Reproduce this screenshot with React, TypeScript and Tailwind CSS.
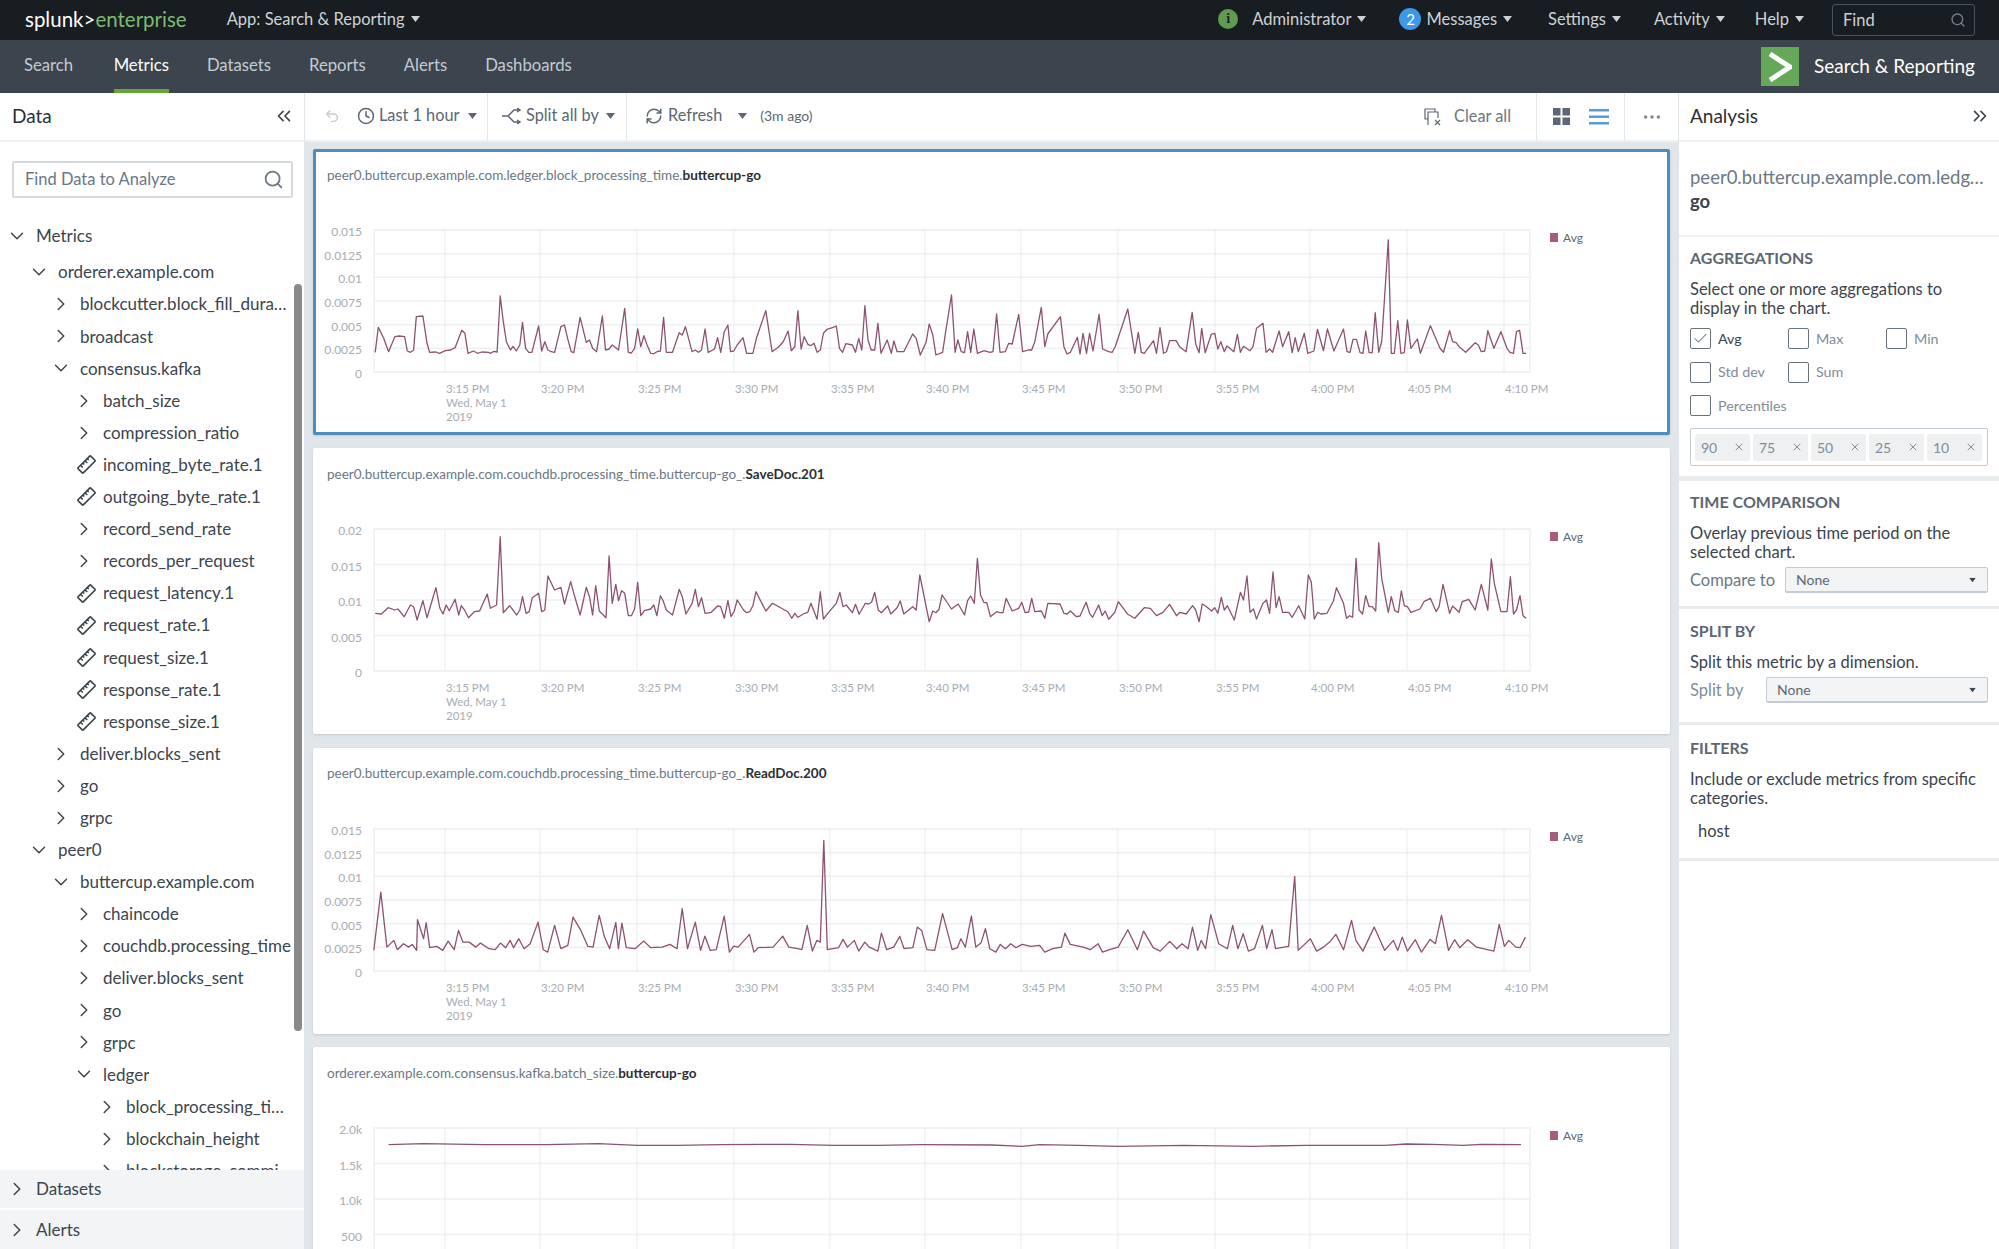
import {
  Check,
  ChevronDown,
  ChevronRight,
  ChevronsLeft,
  ChevronsRight,
  Clock,
  Ellipsis,
  RefreshCw,
  Search,
  Undo2,
  X,
} from "lucide-react";

// traced from the chart, as [x, y] in crop coordinates
type Pt = [number, number];

const toPoints = (pts: Pt[], ox: number, sx: number, oy: number) =>
  pts.map(([x, y]) => `${(ox + x / sx - 316).toFixed(1)},${(oy + y / 3).toFixed(1)}`);

const chart1 = [
  ...toPoints(
    [
      [146, 622], [153, 547], [165, 580], [176, 620], [190, 575], [200, 573], [212, 575], [218, 618], [225, 622], [232, 615], [238, 515], [253, 513], [262, 595], [268, 622], [282, 621], [290, 625], [303, 617], [315, 615], [325, 608], [340, 556], [347, 565], [354, 625], [366, 618], [375, 625], [385, 621], [400, 622], [405, 625], [412, 619], [419, 621], [426, 453], [433, 530], [440, 590], [449, 615], [455, 604], [462, 618], [470, 600], [476, 532], [483, 610], [490, 622], [497, 622], [512, 543], [519, 618], [526, 590], [533, 615], [540, 620], [548, 622], [562, 545], [570, 540], [577, 580], [585, 620], [591, 623], [605, 517], [619, 592], [626, 585], [633, 610], [642, 620], [655, 513], [662, 615], [670, 612], [677, 600], [685, 608], [691, 615], [705, 490], [713, 622], [720, 624], [727, 610], [734, 552], [741, 605], [748, 572], [755, 600], [763, 625], [770, 626], [777, 620], [785, 618], [792, 517], [798, 622], [812, 622], [827, 563], [834, 570], [841, 545], [856, 620], [863, 615], [870, 622], [877, 615], [885, 552], [892, 622], [906, 612], [913, 578], [920, 622], [928, 560], [936, 540], [942, 620], [949, 618], [957, 600], [970, 578], [978, 625], [992, 625], [1000, 580], [1021, 497], [1035, 620], [1050, 605], [1060, 590], [1071, 558], [1078, 617], [1086, 605], [1093, 497], [1100, 612], [1107, 575], [1115, 598], [1122, 602], [1129, 595], [1136, 622], [1143, 615], [1150, 565], [1158, 553], [1172, 547], [1179, 543], [1186, 610], [1193, 622], [1200, 596], [1215, 600], [1222, 622], [1229, 580], [1236, 615], [1243, 482], [1250, 585], [1257, 615], [1265, 615], [1272, 535], [1279, 625], [1293, 585], [1302, 625], [1308, 588], [1315, 620], [1330, 620], [1350, 567], [1358, 580], [1367, 630], [1380, 592], [1387, 537], [1395, 570], [1402, 630], [1417, 622], [1424, 560], [1437, 450], [1445, 622], [1451, 585], [1459, 620], [1466, 623], [1473, 560], [1480, 622], [1487, 552], [1495, 625], [1510, 617], [1523, 622], [1530, 620], [1538, 507],
    ],
    310, 2.24, -55,
  ),
  ...toPoints(
    [
      [0, 622], [12, 620], [20, 595], [28, 597], [43, 508], [52, 620], [65, 615], [73, 615], [80, 590], [95, 487], [103, 605], [110, 567], [139, 515], [147, 605], [154, 627], [162, 622], [178, 577], [184, 627], [191, 565], [199, 625], [206, 565], [214, 618], [228, 508], [236, 612], [250, 620], [258, 622], [265, 605], [294, 492], [310, 625], [318, 562], [325, 622], [332, 625], [353, 587], [360, 625], [368, 548], [376, 625], [383, 620], [390, 587], [405, 587], [413, 605], [428, 620], [442, 502], [450, 597], [458, 623], [464, 550], [472, 623], [486, 568], [494, 565], [501, 612], [508, 590], [516, 620], [522, 603], [538, 620], [546, 568], [553, 622], [560, 604], [575, 617], [582, 605], [590, 550], [605, 535], [612, 622], [620, 612], [627, 622], [642, 558], [650, 605], [664, 560], [672, 623], [679, 578], [686, 620], [700, 565], [708, 625], [722, 618], [730, 553], [744, 617], [753, 552], [768, 618], [790, 552], [798, 620], [805, 622], [812, 583], [820, 583], [828, 623], [835, 625], [841, 558], [849, 623], [856, 623], [863, 503], [871, 622], [878, 590], [893, 285], [900, 625], [907, 625], [915, 527], [922, 625], [930, 623], [937, 525], [945, 610], [960, 582], [967, 625], [990, 542], [1012, 610], [1020, 622], [1034, 557], [1041, 590], [1049, 593], [1056, 605], [1071, 622], [1093, 593], [1100, 600], [1107, 620], [1115, 618], [1122, 557], [1136, 610], [1152, 560], [1166, 610], [1173, 622], [1181, 625], [1188, 560], [1195, 556], [1203, 625], [1210, 625],
    ],
    1000, 2.3, -55,
  ),
].join(" ");

const chart2 = [
  ...toPoints(
    [
      [146, 520], [160, 522], [175, 503], [190, 510], [197, 507], [211, 530], [225, 495], [232, 500], [240, 540], [253, 482], [262, 533], [282, 443], [291, 505], [298, 522], [305, 495], [312, 512], [325, 478], [333, 525], [339, 497], [347, 512], [355, 533], [368, 515], [380, 513], [397, 462], [404, 505], [418, 495], [426, 290], [433, 518], [447, 497], [463, 525], [470, 510], [476, 470], [484, 520], [491, 515], [498, 473], [512, 460], [519, 515], [526, 510], [533, 408], [548, 450], [562, 442], [570, 492], [584, 425], [591, 460], [605, 525], [619, 442], [626, 470], [633, 525], [640, 437], [648, 513], [663, 533], [670, 348], [677, 490], [685, 433], [691, 482], [698, 452], [705, 460], [713, 527], [720, 527], [727, 507], [734, 427], [741, 527], [749, 512], [763, 507], [770, 495], [777, 527], [785, 467], [791, 482], [798, 510], [812, 525], [827, 448], [834, 470], [842, 522], [856, 490], [863, 448], [870, 500], [877, 473], [885, 520], [899, 517], [913, 498], [920, 500], [928, 535], [936, 482], [943, 530], [950, 515], [957, 480], [971, 510], [978, 518], [985, 515], [992, 497], [999, 455], [1021, 513], [1036, 490], [1050, 500], [1071, 516], [1079, 535], [1086, 520], [1093, 532], [1108, 520], [1115, 517], [1122, 490], [1136, 538], [1143, 455], [1150, 537], [1165, 512], [1179, 490], [1187, 457], [1194, 500], [1201, 495], [1215, 518], [1222, 493], [1230, 523], [1244, 490], [1251, 492], [1258, 487], [1265, 457], [1273, 510], [1280, 518], [1294, 498], [1301, 522], [1315, 503], [1322, 483], [1330, 522], [1350, 500], [1358, 510], [1366, 405], [1387, 545], [1395, 513], [1402, 518], [1409, 508], [1416, 465], [1437, 507], [1452, 492], [1466, 525], [1473, 482], [1480, 468], [1488, 490], [1495, 355], [1502, 465], [1510, 488], [1516, 488], [1524, 530], [1538, 515],
    ],
    310, 2.24, -59,
  ),
  ...toPoints(
    [
      [0, 518], [7, 518], [14, 475], [28, 513], [43, 505], [50, 487], [58, 518], [66, 516], [73, 475], [80, 515], [95, 513], [103, 535], [110, 490], [138, 492], [147, 520], [154, 522], [162, 513], [176, 530], [184, 528], [198, 487], [206, 520], [213, 532], [227, 495], [235, 527], [242, 513], [250, 538], [264, 517], [272, 485], [294, 523], [310, 535], [332, 503], [346, 505], [360, 527], [375, 517], [390, 493], [406, 527], [414, 517], [428, 522], [443, 497], [450, 510], [458, 545], [465, 492], [472, 497], [487, 513], [494, 503], [501, 520], [509, 472], [516, 510], [523, 497], [539, 540], [553, 457], [560, 480], [568, 408], [575, 517], [583, 507], [590, 537], [605, 490], [613, 480], [620, 520], [628, 396], [635, 503], [642, 470], [650, 517], [664, 517], [672, 532], [687, 497], [701, 537], [709, 405], [716, 427], [723, 537], [731, 517], [738, 522], [752, 520], [767, 482], [774, 443], [790, 490], [797, 535], [804, 527], [811, 532], [819, 355], [826, 510], [834, 522], [841, 467], [849, 500], [856, 500], [864, 513], [871, 308], [878, 415], [893, 517], [900, 470], [908, 512], [916, 517], [923, 453], [930, 497], [937, 500], [945, 517], [966, 507], [975, 485], [990, 475], [1003, 515], [1010, 500], [1019, 433], [1034, 520], [1041, 498], [1056, 517], [1063, 485], [1078, 478], [1093, 510], [1107, 433], [1122, 510], [1130, 357], [1137, 430], [1152, 515], [1166, 515], [1174, 410], [1181, 522], [1188, 510], [1196, 467], [1203, 527], [1210, 535],
    ],
    1000, 2.3, -59,
  ),
].join(" ");

const chart3 = toPoints(
  [
    [73, 630], [81, 455], [88, 620], [96, 600], [100, 628], [107, 610], [113, 620], [117, 612], [122, 630], [123, 538], [130, 595], [133, 547], [137, 622], [145, 618], [152, 630], [158, 602], [165, 628], [170, 570], [175, 605], [182, 605], [190, 620], [195, 608], [205, 625], [212, 628], [218, 608], [224, 622], [229, 600], [233, 622], [239, 595], [245, 625], [252, 610], [261, 545], [267, 628], [272, 635], [280, 555], [287, 625], [295, 615], [301, 530], [310, 570], [318, 618], [324, 620], [331, 525], [337, 590], [343, 625], [350, 546], [353, 625], [357, 548], [362, 622], [372, 625], [382, 602], [390, 622], [403, 620], [412, 612], [420, 625], [426, 505], [432, 625], [441, 545], [447, 630], [452, 587], [458, 630], [465, 628], [474, 527], [480, 635], [485, 617], [490, 620], [503, 582], [508, 635], [513, 622], [530, 620], [541, 587], [548, 620], [558, 625], [563, 628], [569, 555], [575, 632], [580, 600], [584, 605], [588, 300], [592, 628], [605, 622], [610, 597], [615, 620], [623, 600], [628, 632], [635, 605], [640, 620], [650, 632], [654, 578], [660, 628], [668, 620], [675, 588], [680, 625], [690, 622], [695, 560], [700, 570], [706, 628], [715, 630], [724, 520], [735, 628], [741, 622], [745, 595], [750, 620], [757, 527], [762, 620], [768, 608], [773, 565], [778, 625], [785, 635], [790, 612], [796, 625], [802, 610], [808, 622], [815, 612], [825, 618], [835, 615], [841, 635], [850, 625], [860, 620], [864, 578], [870, 612], [885, 620], [893, 628], [902, 610], [907, 635], [915, 628], [925, 620], [936, 568], [947, 628], [954, 572], [965, 622], [973, 632], [984, 603], [992, 625], [998, 610], [1005, 625], [1010, 560], [1016, 630], [1020, 600], [1025, 625], [1031, 523], [1040, 610], [1050, 625], [1056, 555], [1062, 625], [1068, 580], [1074, 632], [1081, 625], [1090, 555], [1095, 625], [1101, 568], [1105, 625], [1120, 618], [1127, 408], [1131, 630], [1145, 595], [1152, 632], [1160, 620], [1167, 605], [1174, 582], [1183, 628], [1192, 540], [1197, 600], [1205, 632], [1218, 560], [1230, 630], [1240, 600], [1245, 630], [1250, 590], [1256, 632], [1265, 598], [1272, 635], [1282, 597], [1288, 610], [1295, 525], [1303, 630], [1310, 598], [1316, 622], [1325, 598], [1335, 620], [1355, 632], [1361, 552], [1367, 618], [1372, 600], [1380, 620], [1385, 622], [1391, 590],
  ],
  310, 1.1445, -58.6,
).join(" ");

const chart4 = toPoints(
  [
    [90, 344], [130, 341], [200, 344], [270, 344], [330, 341], [375, 346], [420, 346], [470, 344], [550, 343], [600, 346], [650, 346], [700, 344], [780, 345], [815, 349], [835, 344], [880, 346], [925, 349], [1000, 346], [1080, 349], [1140, 346], [1230, 346], [1255, 342], [1285, 343], [1320, 346], [1340, 343], [1386, 344],
  ],
  310, 1.1445, -68,
).join(" ");

const GRID_X = [445, 540, 637, 734, 830, 925, 1021, 1118, 1215, 1310, 1407, 1504].map((x) => x - 316);
const TIMES = ["3:15 PM", "3:20 PM", "3:25 PM", "3:30 PM", "3:35 PM", "3:40 PM", "3:45 PM", "3:50 PM", "3:55 PM", "4:00 PM", "4:05 PM", "4:10 PM"];

const cards = [
  {
    prefix: "peer0.buttercup.example.com.ledger.block_processing_time.",
    name: "buttercup-go",
    ticks: ["0.015", "0.0125", "0.01", "0.0075", "0.005", "0.0025", "0"],
    points: chart1,
    selected: true,
  },
  {
    prefix: "peer0.buttercup.example.com.couchdb.processing_time.buttercup-go_.",
    name: "SaveDoc.201",
    ticks: ["0.02", "0.015", "0.01", "0.005", "0"],
    points: chart2,
  },
  {
    prefix: "peer0.buttercup.example.com.couchdb.processing_time.buttercup-go_.",
    name: "ReadDoc.200",
    ticks: ["0.015", "0.0125", "0.01", "0.0075", "0.005", "0.0025", "0"],
    points: chart3,
  },
  {
    prefix: "orderer.example.com.consensus.kafka.batch_size.",
    name: "buttercup-go",
    ticks: ["2.0k", "1.5k", "1.0k", "500", "0"],
    points: chart4,
  },
];

const tree: { label: string; level: 0 | 1 | 2 | 3 | 4; icon: "open" | "closed" | "metric" }[] = [
  { label: "Metrics", level: 0, icon: "open" },
  { label: "orderer.example.com", level: 1, icon: "open" },
  { label: "blockcutter.block_fill_duration", level: 2, icon: "closed" },
  { label: "broadcast", level: 2, icon: "closed" },
  { label: "consensus.kafka", level: 2, icon: "open" },
  { label: "batch_size", level: 3, icon: "closed" },
  { label: "compression_ratio", level: 3, icon: "closed" },
  { label: "incoming_byte_rate.1", level: 3, icon: "metric" },
  { label: "outgoing_byte_rate.1", level: 3, icon: "metric" },
  { label: "record_send_rate", level: 3, icon: "closed" },
  { label: "records_per_request", level: 3, icon: "closed" },
  { label: "request_latency.1", level: 3, icon: "metric" },
  { label: "request_rate.1", level: 3, icon: "metric" },
  { label: "request_size.1", level: 3, icon: "metric" },
  { label: "response_rate.1", level: 3, icon: "metric" },
  { label: "response_size.1", level: 3, icon: "metric" },
  { label: "deliver.blocks_sent", level: 2, icon: "closed" },
  { label: "go", level: 2, icon: "closed" },
  { label: "grpc", level: 2, icon: "closed" },
  { label: "peer0", level: 1, icon: "open" },
  { label: "buttercup.example.com", level: 2, icon: "open" },
  { label: "chaincode", level: 3, icon: "closed" },
  { label: "couchdb.processing_time", level: 3, icon: "closed" },
  { label: "deliver.blocks_sent", level: 3, icon: "closed" },
  { label: "go", level: 3, icon: "closed" },
  { label: "grpc", level: 3, icon: "closed" },
  { label: "ledger", level: 3, icon: "open" },
  { label: "block_processing_time", level: 4, icon: "closed" },
  { label: "blockchain_height", level: 4, icon: "closed" },
  { label: "blockstorage_commit_time", level: 4, icon: "closed" },
];

const levelPadding = {
  0: "pl-[9px]",
  1: "pl-[31px]",
  2: "pl-[53px]",
  3: "pl-[76px]",
  4: "pl-[99px]",
};

function Caret({ className }: { className?: string }) {
  return (
    <svg width="9" height="6" viewBox="0 0 9 6" className={className}>
      <path d="M0 0h9L4.5 6z" fill="currentColor" />
    </svg>
  );
}

function MetricIcon() {
  return (
    <svg width="19" height="19" viewBox="0 0 18 18" fill="none" stroke="currentColor" strokeWidth="1.6" className="shrink-0 translate-x-[2px]">
      <g transform="rotate(-45 9 9)">
        <rect x="0.5" y="5.5" width="17" height="7" rx="1" />
        <path d="M4.5 5.5v3M7.5 5.5v2M10.5 5.5v3M13.5 5.5v2" />
      </g>
    </svg>
  );
}

function Chart({ card }: { card: (typeof cards)[number] }) {
  const step = 142 / (card.ticks.length - 1);
  return (
    <svg width="1349" height="232" viewBox="0 0 1349 232" className="block">
      <rect x="58" y="30" width="1156" height="142" fill="none" stroke="#eef0f2" strokeWidth="1.5" />
      {card.ticks.map((t, i) => (
        <g key={t}>
          <line x1="58" x2="1214" y1={30 + i * step} y2={30 + i * step} stroke="#eef0f2" strokeWidth="1.5" />
          <text x="46" y={36 + i * step} textAnchor="end" fontSize="12" fill="#a8adb2">
            {t}
          </text>
        </g>
      ))}
      {GRID_X.map((x, i) => (
        <g key={x}>
          <line x1={x} x2={x} y1="30" y2="172" stroke="#e8ebee" />
          <text x={x + 1} y="193" fontSize="11.5" fill="#a8adb2">
            {TIMES[i]}
          </text>
        </g>
      ))}
      <text x="130" y="207" fontSize="11.5" fill="#a8adb2">
        Wed, May 1
      </text>
      <text x="130" y="221" fontSize="11.5" fill="#a8adb2">
        2019
      </text>
      <polyline points={card.points} fill="none" stroke="#8c5272" strokeWidth="1.3" strokeLinejoin="round" />
      <rect x="1234" y="33" width="8" height="9" fill="#a65c7d" />
      <text x="1247" y="42" fontSize="12" fill="#5c6773">
        Avg
      </text>
    </svg>
  );
}

function ChartCard({ card }: { card: (typeof cards)[number] }) {
  return (
    <div
      className={`h-[286px] shrink-0 rounded-[2px] border-[3px] bg-white shadow-sm ${
        card.selected ? "border-[#4f8dba]" : "border-white"
      }`}
    >
      <div className="flex h-[48px] items-center pb-[2px] pl-[11px] text-[13.5px] text-[#6b7785]">
        <span>{card.prefix}</span>
        <span className="font-bold text-[#2b3033]">{card.name}</span>
      </div>
      <Chart card={card} />
    </div>
  );
}

function CheckItem({ label, checked }: { label: string; checked?: boolean }) {
  return (
    <div className="flex w-[98px] items-center gap-[7px]">
      <div className="flex h-[21px] w-[21px] items-center justify-center rounded-[2px] border border-[#69737d]">
        {checked && <Check size={17} strokeWidth={1.3} className="text-[#3c444d]" />}
      </div>
      <span className={`text-[14.3px] ${checked ? "text-[#3c444d]" : "text-[#818d99]"}`}>{label}</span>
    </div>
  );
}

function SectionTitle({ children }: { children: string }) {
  return <div className="text-[16px] font-bold leading-[20px] text-[#5c6773]">{children}</div>;
}

function SelectBox({ className }: { className: string }) {
  return (
    <div
      className={`flex h-[26px] items-center justify-between rounded-[2px] border border-b-2 border-[#c3cbd4] bg-[#f2f4f5] pl-[10px] pr-[10px] text-[14px] text-[#5c6773] ${className}`}
    >
      None
      <Caret className="scale-75 text-[#3c444d]" />
    </div>
  );
}

function NavMenu({ label }: { label: string }) {
  return (
    <div className="flex items-center gap-[6px] text-[16.5px] text-[#ced2d5]">
      {label}
      <Caret />
    </div>
  );
}

export default function App() {
  return (
    <div className="flex h-[1249px] w-[1999px] flex-col overflow-hidden bg-white [font-family:Lato,sans-serif]">
      {/* top bar */}
      <div className="flex h-[40px] shrink-0 items-center bg-[#171d21] pb-[2px] pl-[25px] pr-[24px]">
        <div className="text-[20.5px] leading-none text-[#fff]">
          splunk&gt;<span className="text-[#7dbb72]">enterprise</span>
        </div>
        <div className="ml-[40px] flex items-center gap-[6px] text-[16.5px] text-[#ced2d5]">
          App: Search &amp; Reporting
          <Caret />
        </div>
        <div className="ml-auto flex items-center">
          <div className="mr-[14px] flex h-[20px] w-[20px] items-center justify-center rounded-full bg-[#5f9c50] font-serif text-[13px] font-bold text-[#171d21]">
            i
          </div>
          <NavMenu label="Administrator" />
          <div className="ml-[33px] mr-[5px] flex h-[22px] w-[22px] items-center justify-center rounded-full bg-[#3c98e8] text-[15px] text-white">
            2
          </div>
          <NavMenu label="Messages" />
          <div className="ml-[36px]">
            <NavMenu label="Settings" />
          </div>
          <div className="ml-[33px]">
            <NavMenu label="Activity" />
          </div>
          <div className="ml-[30px]">
            <NavMenu label="Help" />
          </div>
          <div className="ml-[28px] mt-[2px] flex h-[32px] w-[143px] items-center justify-between rounded-[3px] border border-[#4a5259] pl-[10px] pr-[8px] text-[16.5px] text-[#ced2d5]">
            Find
            <Search size={16} className="text-[#7b8287]" />
          </div>
        </div>
      </div>

      {/* app bar */}
      <div className="flex h-[53px] shrink-0 items-center bg-[#3c444d] pl-[24px] pr-[24px]">
        <div className="flex h-full gap-[38px] text-[16.7px] text-[#c3cbd4]">
          <div className="flex items-center pb-[2px]">Search</div>
          <div className="ml-[2.5px] flex items-center border-b-4 border-[#65a637] pt-[2px] text-white">Metrics</div>
          <div className="flex items-center pb-[2px]">Datasets</div>
          <div className="flex items-center pb-[2px]">Reports</div>
          <div className="flex items-center pb-[2px]">Alerts</div>
          <div className="flex items-center pb-[2px]">Dashboards</div>
        </div>
        <div className="ml-auto flex items-center gap-[15px]">
          <div className="flex h-[39px] w-[38px] items-center justify-center bg-[#65a85a]">
            <svg width="24" height="30" viewBox="0 0 24 30">
              <path d="M2 2l20 13L2 28" fill="none" stroke="#fff" strokeWidth="5" />
            </svg>
          </div>
          <div className="text-[19px] text-white">Search &amp; Reporting</div>
        </div>
      </div>

      <div className="flex min-h-0 flex-1">
        {/* data sidebar */}
        <div className="flex w-[305px] shrink-0 flex-col border-r border-[#e1e6eb] bg-white">
          <div className="flex h-[49px] shrink-0 items-center justify-between border-b-2 border-[#eef0f2] pb-[1px] pl-[12px] pr-[9px]">
            <span className="text-[19px] text-[#2b3033]">Data</span>
            <ChevronsLeft size={22} strokeWidth={1.8} className="text-[#3c444d]" />
          </div>
          <div className="pl-[12px] pr-[11px] pt-[19px]">
            <div className="flex h-[37px] items-center justify-between rounded-[2px] border-2 border-[#d5dae0] pb-[1px] pl-[11px] pr-[7px] text-[16.5px] text-[#6b7785]">
              Find Data to Analyze
              <Search size={21} className="text-[#6b7785]" />
            </div>
          </div>
          <div className="relative mt-[22px] min-h-0 flex-1 overflow-hidden">
            {tree.map((row, i) => (
              <div
                key={i}
                className={`flex h-[32.1px] items-center pr-[12px] text-[17px] text-[#3c444d] ${levelPadding[row.level]} ${
                  i === 0 ? "mb-[4px]" : ""
                }`}
              >
                <span className="mr-[11px] flex w-[16px] shrink-0 justify-center">
                  {row.icon === "open" && <ChevronDown size={22} strokeWidth={1.6} className="shrink-0" />}
                  {row.icon === "closed" && <ChevronRight size={22} strokeWidth={1.6} className="shrink-0" />}
                  {row.icon === "metric" && <MetricIcon />}
                </span>
                <span className="truncate">{row.label}</span>
              </div>
            ))}
            <div className="absolute right-[2px] top-[64px] h-[747px] w-[8px] rounded-full bg-[#8a8a8a]" />
          </div>
          <div className="flex h-[38px] shrink-0 items-center bg-[#f2f4f5] pl-[9px] text-[17px] text-[#3c444d]">
            <span className="mr-[11px] flex w-[16px] justify-center">
              <ChevronRight size={22} strokeWidth={1.6} className="shrink-0" />
            </span>
            Datasets
          </div>
          <div className="mt-[2px] flex h-[39px] shrink-0 items-center bg-[#f2f4f5] pl-[9px] text-[17px] text-[#3c444d]">
            <span className="mr-[11px] flex w-[16px] justify-center">
              <ChevronRight size={22} strokeWidth={1.6} className="shrink-0" />
            </span>
            Alerts
          </div>
        </div>

        {/* main column */}
        <div className="flex min-w-0 flex-1 flex-col bg-[#e1e6eb]">
          <div className="flex h-[49px] shrink-0 items-center border-b-2 border-[#eef0f2] bg-white text-[16.3px] text-[#5c6773]">
            <div className="flex h-full w-[183px] items-center border-r border-[#e6e9ec] pb-[2px] pl-[19px]">
              <Undo2 size={16} className="text-[#c3cbd4]" />
              <Clock size={18} className="ml-[17px]" />
              <span className="ml-[4px]">Last 1 hour</span>
              <Caret className="ml-[9px]" />
            </div>
            <div className="flex h-full w-[139px] items-center border-r border-[#e6e9ec] pb-[2px] pl-[14px]">
              <svg width="20" height="16" viewBox="0 0 20 16" fill="none" stroke="currentColor" strokeWidth="1.5">
                <path d="M0 8h6l6-6h6M6 8l6 6h6M15 0l3 2-3 2M15 12l3 2-3 2" />
              </svg>
              <span className="ml-[4px]">Split all by</span>
              <Caret className="ml-[7px]" />
            </div>
            <div className="flex h-full items-center pb-[2px] pl-[18px]">
              <RefreshCw size={18} />
              <span className="ml-[5px]">Refresh</span>
              <Caret className="ml-[16px]" />
              <span className="ml-[13px] text-[14px]">(3m ago)</span>
            </div>
            <div className="ml-auto flex h-full items-center">
              <svg width="18" height="18" viewBox="0 0 18 18" fill="none" stroke="currentColor" strokeWidth="1.2">
                <path d="M4 11H1V1h10v3M4 17V4h10v6" />
                <path d="M11 12l5 5M16 12l-5 5" />
              </svg>
              <span className="ml-[12px] mr-[25px] text-[#6b7785]">Clear all</span>
              <div className="flex h-full w-[89px] items-center justify-center gap-[19px] border-x border-[#e6e9ec]">
                <svg width="17" height="17" viewBox="0 0 17 17" fill="#5c6773">
                  <path d="M0 0h7.5v7.5H0zM9.5 0H17v7.5H9.5zM0 9.5h7.5V17H0zM9.5 9.5H17V17H9.5z" />
                </svg>
                <svg width="20" height="16" viewBox="0 0 20 16" fill="#5b9bd0">
                  <path d="M0 0h20v2.5H0zM0 6.5h20v2.5H0zM0 13h20v2.5H0z" />
                </svg>
              </div>
              <div className="flex h-full w-[53px] items-center justify-center">
                <Ellipsis size={22} className="text-[#818d99]" />
              </div>
            </div>
          </div>
          <div className="flex min-h-0 flex-1 flex-col gap-[13.3px] overflow-hidden pl-[8px] pr-[8.5px] pt-[7px]">
            {cards.map((card) => (
              <ChartCard key={card.prefix + card.name} card={card} />
            ))}
          </div>
        </div>

        {/* analysis panel */}
        <div className="flex w-[321px] shrink-0 flex-col border-l border-[#e1e6eb] bg-white">
          <div className="flex h-[49px] shrink-0 items-center justify-between border-b-2 border-[#eef0f2] pb-[1px] pl-[11px] pr-[8px]">
            <span className="text-[19px] text-[#2b3033]">Analysis</span>
            <ChevronsRight size={22} strokeWidth={1.8} className="text-[#3c444d]" />
          </div>
          <div className="h-[95px] shrink-0 border-b-2 border-[#eef0f2] pl-[11px] pr-[14px] pt-[23px] text-[18.5px] leading-[24px]">
            <div className="truncate text-[#6b7785]">peer0.buttercup.example.com.ledger.block_processing_time.buttercup-</div>
            <div className="font-bold text-[#3c444d]">go</div>
          </div>
          <div className="h-[244px] shrink-0 border-b-[5px] border-[#e9ecef] pl-[11px] pr-[11px] pt-[11px]">
            <SectionTitle>AGGREGATIONS</SectionTitle>
            <p className="mt-[12px] text-[16.5px] leading-[19px] text-[#3c444d]">
              Select one or more aggregations to display in the chart.
            </p>
            <div className="mt-[10px] flex">
              <CheckItem label="Avg" checked />
              <CheckItem label="Max" />
              <CheckItem label="Min" />
            </div>
            <div className="mt-[12px] flex">
              <CheckItem label="Std dev" />
              <CheckItem label="Sum" />
            </div>
            <div className="mt-[12px] flex">
              <CheckItem label="Percentiles" />
            </div>
            <div className="mt-[12px] flex h-[38px] items-center gap-[3px] rounded-[2px] border border-[#c3cbd4] px-[4px]">
              {["90", "75", "50", "25", "10"].map((p) => (
                <div
                  key={p}
                  className="flex h-[27px] w-[55px] items-center justify-between rounded-[2px] bg-[#eef0f1] pl-[6px] pr-[5px] text-[14px] text-[#818d99]"
                >
                  {p}
                  <X size={12} className="text-[#818d99]" />
                </div>
              ))}
            </div>
          </div>
          <div className="h-[128px] shrink-0 border-b-[3px] border-[#e9ecef] pl-[11px] pr-[11px] pt-[11px]">
            <SectionTitle>TIME COMPARISON</SectionTitle>
            <p className="mt-[12px] text-[16.5px] leading-[19px] text-[#3c444d]">
              Overlay previous time period on the selected chart.
            </p>
            <div className="mt-[5px] flex items-center">
              <span className="w-[95px] text-[16.5px] text-[#6b7785]">Compare to</span>
              <SelectBox className="w-[203px]" />
            </div>
          </div>
          <div className="h-[116px] shrink-0 border-b-[3px] border-[#e9ecef] pl-[11px] pr-[11px] pt-[12px]">
            <SectionTitle>SPLIT BY</SectionTitle>
            <p className="mt-[12px] text-[16.5px] leading-[19px] text-[#3c444d]">Split this metric by a dimension.</p>
            <div className="mt-[5px] flex items-center">
              <span className="w-[76px] text-[16.5px] text-[#818d99]">Split by</span>
              <SelectBox className="w-[222px]" />
            </div>
          </div>
          <div className="h-[136px] shrink-0 border-b-[3px] border-[#e9ecef] pl-[11px] pr-[11px] pt-[13px]">
            <SectionTitle>FILTERS</SectionTitle>
            <p className="mt-[12px] text-[16.5px] leading-[19px] text-[#3c444d]">
              Include or exclude metrics from specific categories.
            </p>
            <div className="mt-[11px] pl-[8px] text-[16.5px] text-[#3c444d]">host</div>
          </div>
        </div>
      </div>
    </div>
  );
}
